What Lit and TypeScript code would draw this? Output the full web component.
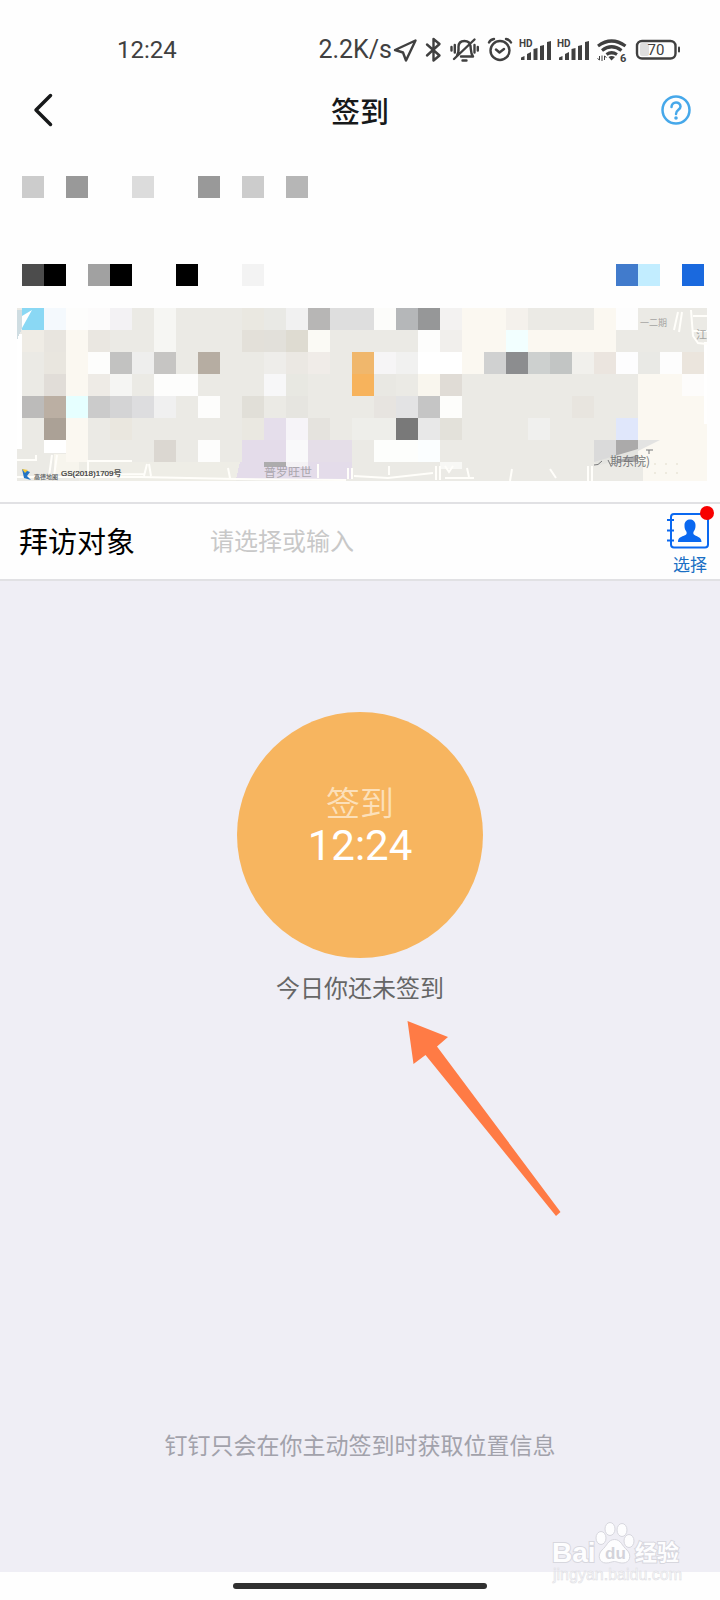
import { LitElement, html, svg, css } from "lit";
import { customElement, state } from "lit/decorators.js";

type Tile = [col: number, row: number, span: number, color: string, height?: number];

const TILE = 22;
const CREAM = "#fbf8f1";

const tiles: Tile[] = [
  [1, 0, 1, "#8ad8f4"], [2, 0, 1, "#f4f9fd"], [3, 0, 1, "#fdfdfc"], [4, 0, 1, "#fcfbfb"], [5, 0, 1, "#f3f2f4"],
  [7, 0, 1, "#f6f6f3"], [11, 0, 1, "#eae8e1"], [12, 0, 1, "#e9e9e5"], [13, 0, 1, "#f1f1f1"], [14, 0, 1, "#b7b6b5"],
  [15, 0, 2, "#dedede"], [17, 0, 1, "#fcfcfa"], [18, 0, 1, "#b5b7b9"], [19, 0, 1, "#969798"], [20, 0, 1, "#f3f2f1"],
  [21, 0, 2, CREAM], [23, 0, 1, "#f4f1ec"], [27, 0, 1, CREAM], [28, 0, 1, "#fdfdfd"],

  [1, 1, 1, "#efece5"], [2, 1, 1, "#e8e5df"], [3, 1, 1, CREAM], [4, 1, 1, "#eae7e1"], [7, 1, 1, "#f6f6f3"],
  [11, 1, 1, "#e3e0d9"], [12, 1, 1, "#e2e0da"], [13, 1, 1, "#dedbd1"], [14, 1, 1, "#fbfaf5"], [19, 1, 1, "#fdfdfc"],
  [20, 1, 1, "#f1efec"], [21, 1, 2, CREAM], [23, 1, 1, "#f2ffff"], [24, 1, 4, CREAM],

  [2, 2, 1, "#e9e6df"], [3, 2, 1, CREAM], [4, 2, 1, "#fdfdfc"], [5, 2, 1, "#c2c2c1"], [6, 2, 1, "#eeeeed"],
  [7, 2, 1, "#c6c5c3"], [9, 2, 1, "#b6ada2"], [12, 2, 1, "#eeedea"], [13, 2, 1, "#ebe8e3"], [14, 2, 1, "#f0ece8"],
  [16, 2, 1, "#f0b76c"], [17, 2, 1, "#f6f5f6"], [18, 2, 1, "#f1f1f0"], [19, 2, 2, "#ffffff"], [21, 2, 1, CREAM],
  [22, 2, 1, "#d0d1d1"], [23, 2, 1, "#8c8d8f"], [24, 2, 1, "#cdd0cf"], [25, 2, 1, "#c2c5c4"], [26, 2, 1, "#f1f0ec"],
  [27, 2, 1, "#ebe5df"], [28, 2, 1, "#fdfdfe"], [29, 2, 1, "#e9e9e5"], [30, 2, 1, "#fdfdfd"], [31, 2, 1, "#ebe5dd"],

  [2, 3, 1, "#e1ddd8"], [3, 3, 1, CREAM], [4, 3, 1, "#eeebe6"], [5, 3, 1, "#f5f5f3"], [7, 3, 2, "#fdfdfc"],
  [12, 3, 1, "#f7f7f8"], [13, 3, 1, "#e8e8e2"], [16, 3, 1, "#f7b35c"], [17, 3, 1, "#e9e8e3"], [19, 3, 1, "#f9f6ee"],
  [20, 3, 1, "#e0dcd6"], [29, 3, 2, CREAM], [31, 3, 1, "#fdfcfb"],

  [1, 4, 1, "#bcbbba"], [2, 4, 1, "#bbafa3"], [3, 4, 1, "#e6ffff"], [4, 4, 1, "#cbcbcb"], [5, 4, 1, "#d4d4d5"],
  [6, 4, 1, "#dddddf"], [7, 4, 1, "#f0f0f0"], [9, 4, 1, "#fdfdfc"], [11, 4, 1, "#e1dfd8"], [13, 4, 1, "#e6e5e0"],
  [17, 4, 1, "#e7e4e0"], [18, 4, 1, "#e3e3e4"], [19, 4, 1, "#c5c5c5"], [20, 4, 1, "#fdfdfb"], [26, 4, 1, "#e8e5df"],
  [29, 4, 3, CREAM],

  [2, 5, 1, "#aba196"], [3, 5, 1, CREAM], [5, 5, 1, "#eae7df"], [11, 5, 1, "#eae8e1"], [12, 5, 1, "#e5deeb"],
  [13, 5, 1, "#f6f4f8"], [14, 5, 1, "#e5e3de"], [16, 5, 2, "#eeeeea"], [18, 5, 1, "#797979"], [19, 5, 1, "#e8e8e8"],
  [20, 5, 1, "#e3e1da"], [24, 5, 1, "#f0f0ee"], [28, 5, 1, "#e0e7fb"], [29, 5, 3, CREAM],

  [2, 6, 1, "#ffffff", 13], [3, 6, 1, CREAM], [7, 6, 1, "#dbd7d1"], [9, 6, 1, "#fdfdfc"], [11, 6, 2, "#e4dcea"],
  [13, 6, 1, "#f9f9fa"], [14, 6, 2, "#e5dee8"], [17, 6, 2, "#fdfefc"], [19, 6, 1, "#fbfeff"], [27, 6, 1, "#dadada"],
  [28, 6, 1, "#abaaaa"],

  [12, 7, 1, "#adacad", 5], [13, 7, 1, "#f4f2f5", 5], [20, 7, 1, "#f8f8f5", 7],
];

const drawTiles = (list: Tile[]) =>
  list.map(
    ([c, r, span, color, h]) =>
      svg`<rect x=${c * TILE} y=${r * TILE} width=${span * TILE} height=${h ?? TILE} fill=${color}></rect>`,
  );

@customElement("map-preview")
export class MapPreview extends LitElement {
  static styles = css`
    :host { display: block; }
    .map { display: block; width: 100%; height: auto; }
    .label { font-family: "Noto Sans CJK SC", sans-serif; }
    .mark { font-family: "Liberation Sans", "Noto Sans CJK SC", sans-serif; }
  `;

  render() {
    return html`
      <svg class="map" viewBox="17 0 690 173" shape-rendering="crispEdges" role="img" aria-label="地图">
        <rect x="17" y="0" width="690" height="173" fill="#ebeae5"></rect>
        <rect x="17" y="26" width="5" height="115" fill="#ffffff"></rect>
        <rect x="704" y="34" width="3" height="86" fill="#ffffff"></rect>
        <path d="M17 2H22V20L17 32Z" fill="#cfdde2"></path>
        <path d="M638 132H707V173H643V152L638 154Z M704 116H707V134H704Z" fill=${CREAM}></path>
        <path d="M54 146H86V162L82 166H54Z" fill="#f7f5ed"></path>
        <path d="M79 154H240L236 173H79Z" fill="#eeede6"></path>
        <path d="M240 154H352V171H236Z" fill="#e4dcea"></path>
        ${drawTiles(tiles)}
        <g shape-rendering="auto">
          <path d="M22 20L32 2L22 8V2" fill="#ffffff"></path>
          <path d="M638 132H660L638 143Z" fill="#e3e3e2"></path>
          <path d="M594 154L638 141V147L600 157Z" fill="#e4e4e0"></path>
          <g fill="none" stroke="#fffefa" stroke-width="2">
            <path d="M17 152H36V147M52 147L49 168M57 147L54 168M17 169H140L236 171L346 172M88 166V153H132M144 168L147 156M151 168L149 156M82 167L144 166M230 170L228 160M318 170V156M348 171V160M352 171V160M354 168L388 170L433 165M389 167V158M436 172V158M440 172V158M445 158L449 164L453 158M445 170H474M467 160L469 169"></path>
            <path d="M510 173L512 161M550 161L556 170M588 173V158M592 173V158M674 22L678 4M679 24L682 4M691 2L693 28L698 35L707 36M693 8H707M693 23H707"></path>
          </g>
          <g stroke="#eeeade" stroke-width="2" stroke-dasharray="2 9">
            <path d="M654 156H686M654 165H686"></path>
          </g>
          <path d="M22 161L30 164L27 168L31 172L24 170Z" fill="#2474c4"></path>
          <path d="M22 161L28 162L25 165Z" fill="#f5c839"></path>
          <text class="label" x="34" y="171" font-size="6" font-weight="500" fill="#55585b">高德地图</text>
          <text class="mark" x="61" y="168" font-size="8" fill="#333333" stroke="#333333" stroke-width="0.2">GS(2018)1709号</text>
          <text class="label" x="264" y="169" font-size="12" fill="#aaa6ad">普罗旺世</text>
          <text class="label" x="610" y="158" font-size="12" fill="#77787a">期东院)</text>
          <path d="M594 157Q598 158 602 153M608 152L611 158M646 142H653M649 142V146" stroke="#77787a" fill="none"></path>
          <text class="label" x="640" y="18" font-size="9" fill="#a5a5a2">一二期</text>
          <text class="label" x="696" y="31" font-size="11" fill="#a5a5a2">江</text>
        </g>
      </svg>
    `;
  }
}

@customElement("status-bar")
export class StatusBar extends LitElement {
  static styles = css`
    :host {
      display: flex;
      align-items: center;
      justify-content: space-between;
      padding: 36px 38px 0 117px;
      font-family: Roboto, sans-serif;
      font-size: 24px;
      line-height: 28px;
      color: #404040;
    }
    .right { display: flex; align-items: center; }
    .speed { font-size: 25px; }
    svg { display: block; flex: none; }
    .line { fill: none; stroke: #404040; stroke-width: 2.4; stroke-linecap: round; stroke-linejoin: round; }
    .solid { fill: #404040; }
  `;

  private signal() {
    return html`
      <svg width="38" height="28" viewBox="516 36 38 28">
        <text class="solid" x="519" y="47" font-size="10" font-weight="700">HD</text>
        <path class="solid" d="M521 60V57.500L524.500 56V60ZM527 60V54L531 52V60ZM533.500 60V49L537.500 48V60ZM540 60V46L544 45V60ZM547 60V42L551 41V60Z"></path>
      </svg>
    `;
  }

  render() {
    return html`
      <span>12:24</span>
      <div class="right">
        <span class="speed">2.2K/s</span>
        <svg width="28" height="28" viewBox="392 36 28 28">
          <path class="line" d="M395 50L415.500 40.500L406 60.500L403 52.500Z"></path>
        </svg>
        <svg width="26" height="28" viewBox="420 36 26 28">
          <path class="line" d="M427 44.500L439.500 55.500L433.500 60.500V39L439.500 44L427 55.500"></path>
        </svg>
        <svg width="38" height="28" viewBox="446 36 38 28">
          <path class="line" d="M457 55.500C459 53 458.500 50 458.500 47C458.500 43 461 41 464.500 41C468 41 470 42.500 470.500 46C471 50 470.500 53 473 56.500H461M454 59L474.500 39.500M462.500 60.500H466.500"></path>
          <path class="line" d="M451.500 47V50.500M454.800 45V52.500M474.500 45V52.500M477.800 47V50.500" stroke-width="2"></path>
        </svg>
        <svg width="32" height="28" viewBox="484 36 32 28">
          <circle class="line" cx="500" cy="50.500" r="9.500"></circle>
          <path class="line" d="M496 49.500L499.500 52.500L504 49M489 42.500Q490.500 39.500 494 39M511 42.500Q509.500 39.500 506 39"></path>
        </svg>
        ${this.signal()} ${this.signal()}
        <svg width="38" height="28" viewBox="592 36 38 28">
          <g fill="none" stroke="#404040" stroke-width="3.2">
            <path d="M598 46Q611.500 36 625.500 46M602 50.500Q611.500 43 621.500 50.500M606.500 54.500Q611.500 51 617 54.500"></path>
          </g>
          <path class="solid" d="M608.500 57Q611.500 55 615 57L611.500 60.500Z"></path>
          <path d="M599.500 56V60L597.500 58.500M602 61V55.500M604.500 60V56L606.500 57.500" fill="none" stroke="#404040"></path>
          <text class="solid" x="620" y="62" font-size="11" font-weight="700">6</text>
        </svg>
        <svg width="52" height="28" viewBox="630 36 52 28">
          <rect x="640" y="43" width="9" height="13" rx="2" fill="#dedede"></rect>
          <rect class="line" x="637" y="41" width="38.500" height="17.500" rx="5"></rect>
          <rect class="solid" x="678" y="46.500" width="2" height="6" rx="1"></rect>
          <text class="solid" x="656" y="55" font-size="15" text-anchor="middle">70</text>
        </svg>
      </div>
    `;
  }
}

@customElement("app-root")
export class AppRoot extends LitElement {
  static styles = css`
    :host {
      display: flex;
      flex-direction: column;
      position: relative;
      min-height: 100vh;
      background: #fefefe;
      font-family: "Noto Sans CJK SC", sans-serif;
      color: #000000;
    }
    svg { display: block; }
    button {
      border: 0;
      padding: 0;
      background: none;
      font: inherit;
      color: inherit;
      cursor: pointer;
    }
    .nav {
      display: grid;
      grid-template-columns: 1fr auto 1fr;
      align-items: center;
      height: 92px;
      padding: 0 28px;
    }
    .title { margin: 0; font-size: 29px; line-height: 40px; font-weight: 500; color: #17191a; }
    .help { justify-self: end; }
    .place { display: flex; flex-direction: column; padding: 20px 13px 21px 17px; }
    .line { display: flex; justify-content: space-between; padding: 0 3px 0 5px; }
    .address { padding-top: 66px; padding-bottom: 22px; }
    .field {
      display: flex;
      align-items: center;
      gap: 75px;
      height: 71px;
      padding: 0 5px 4px 19px;
      border-top: 2px solid #e1e1e4;
      border-bottom: 2px solid #e1e1e4;
    }
    .field-label { font-size: 29px; line-height: 40px; }
    .field-input {
      flex: 1;
      min-width: 0;
      border: 0;
      padding: 0;
      outline: 0;
      background: none;
      font: inherit;
      font-size: 24px;
      line-height: 36px;
    }
    .field-input::placeholder { color: #c8c8c8; opacity: 1; }
    .pick { display: flex; flex-direction: column; align-items: center; font-size: 17px; line-height: 22px; color: #1a6fc4; }
    .content {
      flex: 1;
      display: flex;
      flex-direction: column;
      align-items: center;
      padding: 131px 0 112px;
      background: #efeef5;
    }
    .check {
      display: flex;
      flex-direction: column;
      align-items: center;
      justify-content: center;
      width: 246px;
      height: 246px;
      padding-bottom: 22px;
      box-sizing: border-box;
      border-radius: 50%;
      background: #f7b55f;
    }
    .check-label { font-size: 34px; line-height: 44px; color: #fce0ba; font-weight: 350; }
    .check-time { font-family: Roboto, sans-serif; font-size: 42px; line-height: 44px; color: #ffffff; }
    .status { margin: 11px 0 0; font-size: 24px; line-height: 36px; color: #666666; }
    .note { margin: auto 0 0; font-size: 23px; line-height: 32px; color: #a2a2ab; }
    .home { display: flex; justify-content: center; padding: 11px 0; }
    .pill { width: 254px; height: 6px; border-radius: 3px; background: #303030; }
    .arrow { position: absolute; left: calc(50% + 46px); top: 1020px; pointer-events: none; }
    .watermark { position: absolute; right: 38px; bottom: 14px; pointer-events: none; }
    .brand {
      font-family: "Noto Sans CJK SC", sans-serif;
      font-weight: 700;
      fill: #fdfdfe;
      stroke: #d7d7de;
      stroke-width: 2px;
      paint-order: stroke;
    }
    .brand-latin { font-family: "Liberation Sans", sans-serif; }
  `;

  @state() private target = "";

  private onInput(e: Event) {
    this.target = (e.target as HTMLInputElement).value;
  }

  render() {
    return html`
      <status-bar></status-bar>
      <header class="nav">
        <button aria-label="返回">
          <svg width="28" height="36" viewBox="28 92 28 36" fill="none" stroke="#17191a" stroke-width="3.500" stroke-linecap="round" stroke-linejoin="round">
            <path d="M50.500 95.500L36 110L50.500 124.500"></path>
          </svg>
        </button>
        <h1 class="title">签到</h1>
        <button class="help" aria-label="帮助">
          <svg width="32" height="32" viewBox="0 0 32 32" fill="none" stroke="#46a8ea" stroke-width="2.500">
            <circle cx="16" cy="16" r="13.500"></circle>
            <path d="M11.500 13C11.500 7 20.500 7 20.500 12.500C20.500 16 16 15.500 16 20" stroke-linecap="round"></path>
            <circle cx="16" cy="24" r="1.800" fill="#46a8ea" stroke="none"></circle>
          </svg>
        </button>
      </header>

      <section class="place">
        <div class="line">
          <svg width="286" height="22" viewBox="22 0 286 22" shape-rendering="crispEdges" aria-hidden="true">
            ${drawTiles([[1, 0, 1, "#cccccc"], [3, 0, 1, "#999999"], [6, 0, 1, "#dcdcdc"], [9, 0, 1, "#999999"], [11, 0, 1, "#cccccc"], [13, 0, 1, "#b6b6b6"]])}
          </svg>
        </div>
        <div class="line address">
          <svg width="242" height="22" viewBox="22 0 242 22" shape-rendering="crispEdges" aria-hidden="true">
            ${drawTiles([[1, 0, 1, "#4c4c4c"], [2, 0, 1, "#000000"], [4, 0, 1, "#a1a1a1"], [5, 0, 1, "#000000"], [8, 0, 1, "#000000"], [11, 0, 1, "#f3f3f3"]])}
          </svg>
          <svg width="88" height="22" viewBox="0 0 88 22" shape-rendering="crispEdges" aria-hidden="true">
            ${drawTiles([[0, 0, 1, "#417bcc"], [1, 0, 1, "#c2edff"], [3, 0, 1, "#1a69de"]])}
          </svg>
        </div>
        <map-preview></map-preview>
      </section>

      <div class="field">
        <label class="field-label" for="target">拜访对象</label>
        <input class="field-input" id="target" placeholder="请选择或输入" .value=${this.target} @input=${this.onInput} />
        <button class="pick">
          <svg width="50" height="48" viewBox="665 505 50 48">
            <g fill="none" stroke="#0a68f0" stroke-width="2">
              <rect x="671" y="514" width="37" height="33.500" rx="3"></rect>
              <path d="M667 520H674M667 530.500H674M667 540.500H674"></path>
            </g>
            <path d="M678 542C678 537.500 681 537 685.500 535C687 534 687 532.500 686 531C684.500 529 684.500 527 684.500 525C684.500 517.500 695.500 517.500 695.500 525C695.500 527 695.500 529 694 531C693 532.500 693 534 694.500 535C698 537 701.500 537.500 701.500 542Z" fill="#0a68f0"></path>
            <circle cx="707" cy="513" r="7" fill="#f80000"></circle>
          </svg>
          <span>选择</span>
        </button>
      </div>

      <main class="content">
        <button class="check">
          <span class="check-label">签到</span>
          <span class="check-time">12:24</span>
        </button>
        <p class="status">今日你还未签到</p>
        <p class="note">钉钉只会在你主动签到时获取位置信息</p>
      </main>

      <footer class="home"><div class="pill"></div></footer>

      <svg class="arrow" width="156" height="198" viewBox="406 1020 156 198" aria-hidden="true">
        <path d="M407.500 1021L448 1037L437 1046.500L560.500 1212L556 1216L425.500 1055L413.500 1064Z" fill="#ff7b45"></path>
      </svg>

      <svg class="watermark" width="132" height="66" viewBox="550 1520 132 66" aria-hidden="true">
        <g fill="#fdfdfe" stroke="#d7d7de" stroke-width="1">
          <ellipse cx="601" cy="1538" rx="5" ry="6.500"></ellipse>
          <ellipse cx="610" cy="1529" rx="5" ry="6.500"></ellipse>
          <ellipse cx="622" cy="1530" rx="5" ry="6.500"></ellipse>
          <ellipse cx="629" cy="1541" rx="5" ry="6.500"></ellipse>
          <path d="M614.500 1539.500C621 1539.500 622 1546 627 1550C632 1555 630 1563 623 1563C618 1563 617 1561.500 614.500 1561.500C612 1561.500 610 1563 606 1563C599 1563 597 1555 602 1550C607 1546 608 1539.500 614.500 1539.500Z"></path>
        </g>
        <text class="brand brand-latin" x="552" y="1562" font-size="28">Bai</text>
        <text class="brand-latin" x="605" y="1559" font-size="17" font-weight="700" fill="#d3d3da">du</text>
        <text class="brand" x="635" y="1560" font-size="22">经验</text>
        <text class="brand-latin" x="553" y="1580" font-size="16" fill="#f8f8fa" stroke="#dcdce2" stroke-width="0.500">jingyan.baidu.com</text>
      </svg>
    `;
  }
}
